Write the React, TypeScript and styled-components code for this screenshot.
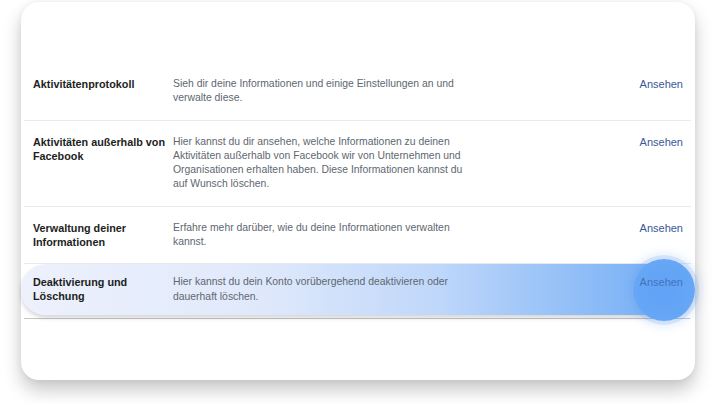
import React from "react"
import styled, { createGlobalStyle } from "styled-components"

const GlobalStyle = createGlobalStyle`
  html, body {
    margin: 0;
    padding: 0;
    background: #ffffff;
  }
  body {
    font-family: "Liberation Sans", Arial, sans-serif;
  }
`

const Page = styled.div`
  width: 718px;
  height: 404px;
  padding-top: 2px;
  box-sizing: border-box;
  overflow: hidden;
`

const Card = styled.div`
  margin-left: 21px;
  width: 674px;
  height: 378px;
  background: #ffffff;
  border-radius: 18px;
  box-shadow: 0 10px 18px rgba(0, 0, 0, 0.22), 0 0 6px rgba(0, 0, 0, 0.06);
  padding-top: 61px;
  box-sizing: border-box;
  position: relative;
`

const List = styled.div`
  display: flex;
  flex-direction: column;
`

interface RowProps {
  $active?: boolean
}

const Row = styled.div<RowProps>`
  display: grid;
  grid-template-columns: 140px 300px 1fr;
  align-items: start;
  padding: 14px 8px 14px 9px;
  margin: 0 4px 0 3px;
  border-bottom: 1px solid #e9ebee;
  position: relative;
  ${(p) =>
    p.$active &&
    `
    margin: 0 2px 0 0;
    padding: 11px 10px 11px 12px;
    border-bottom: none;
    border-radius: 25px;
    background: linear-gradient(90deg, #edf1fc 0%, #e0e9fb 35%, #bfd7fa 62%, #92bff7 82%, #6eaaf6 100%);
    box-shadow: 0 3px 4px rgba(0, 0, 0, 0.16);
  `}
`

const Title = styled.div`
  font-size: 10.8px;
  font-weight: 700;
  line-height: 14px;
  color: #1c1e21;
  position: relative;
  z-index: 1;
`

const Desc = styled.div`
  font-size: 10.4px;
  line-height: 14.3px;
  color: #606770;
  position: relative;
  z-index: 1;
`

const Link = styled.a<RowProps>`
  justify-self: end;
  font-size: 11px;
  line-height: 14px;
  color: ${(p) => (p.$active ? "#4272bd" : "#385898")};
  text-decoration: none;
  position: relative;
  z-index: 1;
`

const Tap = styled.div`
  position: absolute;
  right: -2px;
  top: 50%;
  width: 62px;
  height: 62px;
  margin-top: -31px;
  border-radius: 50%;
  background: radial-gradient(circle, #62a2f6 0%, #66a6f6 65%, #7ab2f5 100%);
  box-shadow: 0 0 0 4px rgba(110, 165, 240, 0.2), 0 0 10px 6px rgba(110, 165, 240, 0.18);
  z-index: 0;
`

const BottomRule = styled.div`
  height: 1px;
  margin: 3px 5px 0 3px;
  background: #c4c6ca;
`

const rows = [
  {
    title: "Aktivitätenprotokoll",
    desc: "Sieh dir deine Informationen und einige Einstellungen an und verwalte diese.",
  },
  {
    title: "Aktivitäten außerhalb von Facebook",
    desc: "Hier kannst du dir ansehen, welche Informationen zu deinen Aktivitäten außerhalb von Facebook wir von Unternehmen und Organisationen erhalten haben. Diese Informationen kannst du auf Wunsch löschen.",
  },
  {
    title: "Verwaltung deiner Informationen",
    desc: "Erfahre mehr darüber, wie du deine Informationen verwalten kannst.",
  },
  {
    title: "Deaktivierung und Löschung",
    desc: "Hier kannst du dein Konto vorübergehend deaktivieren oder dauerhaft löschen.",
    active: true,
  },
]

export default function App() {
  return (
    <Page>
      <GlobalStyle />
      <Card>
        <List>
          {rows.map((r) => (
            <Row key={r.title} $active={r.active}>
              <Title>{r.title}</Title>
              <Desc>{r.desc}</Desc>
              <Link $active={r.active}>Ansehen</Link>
              {r.active && <Tap />}
            </Row>
          ))}
        </List>
        <BottomRule />
      </Card>
    </Page>
  )
}
